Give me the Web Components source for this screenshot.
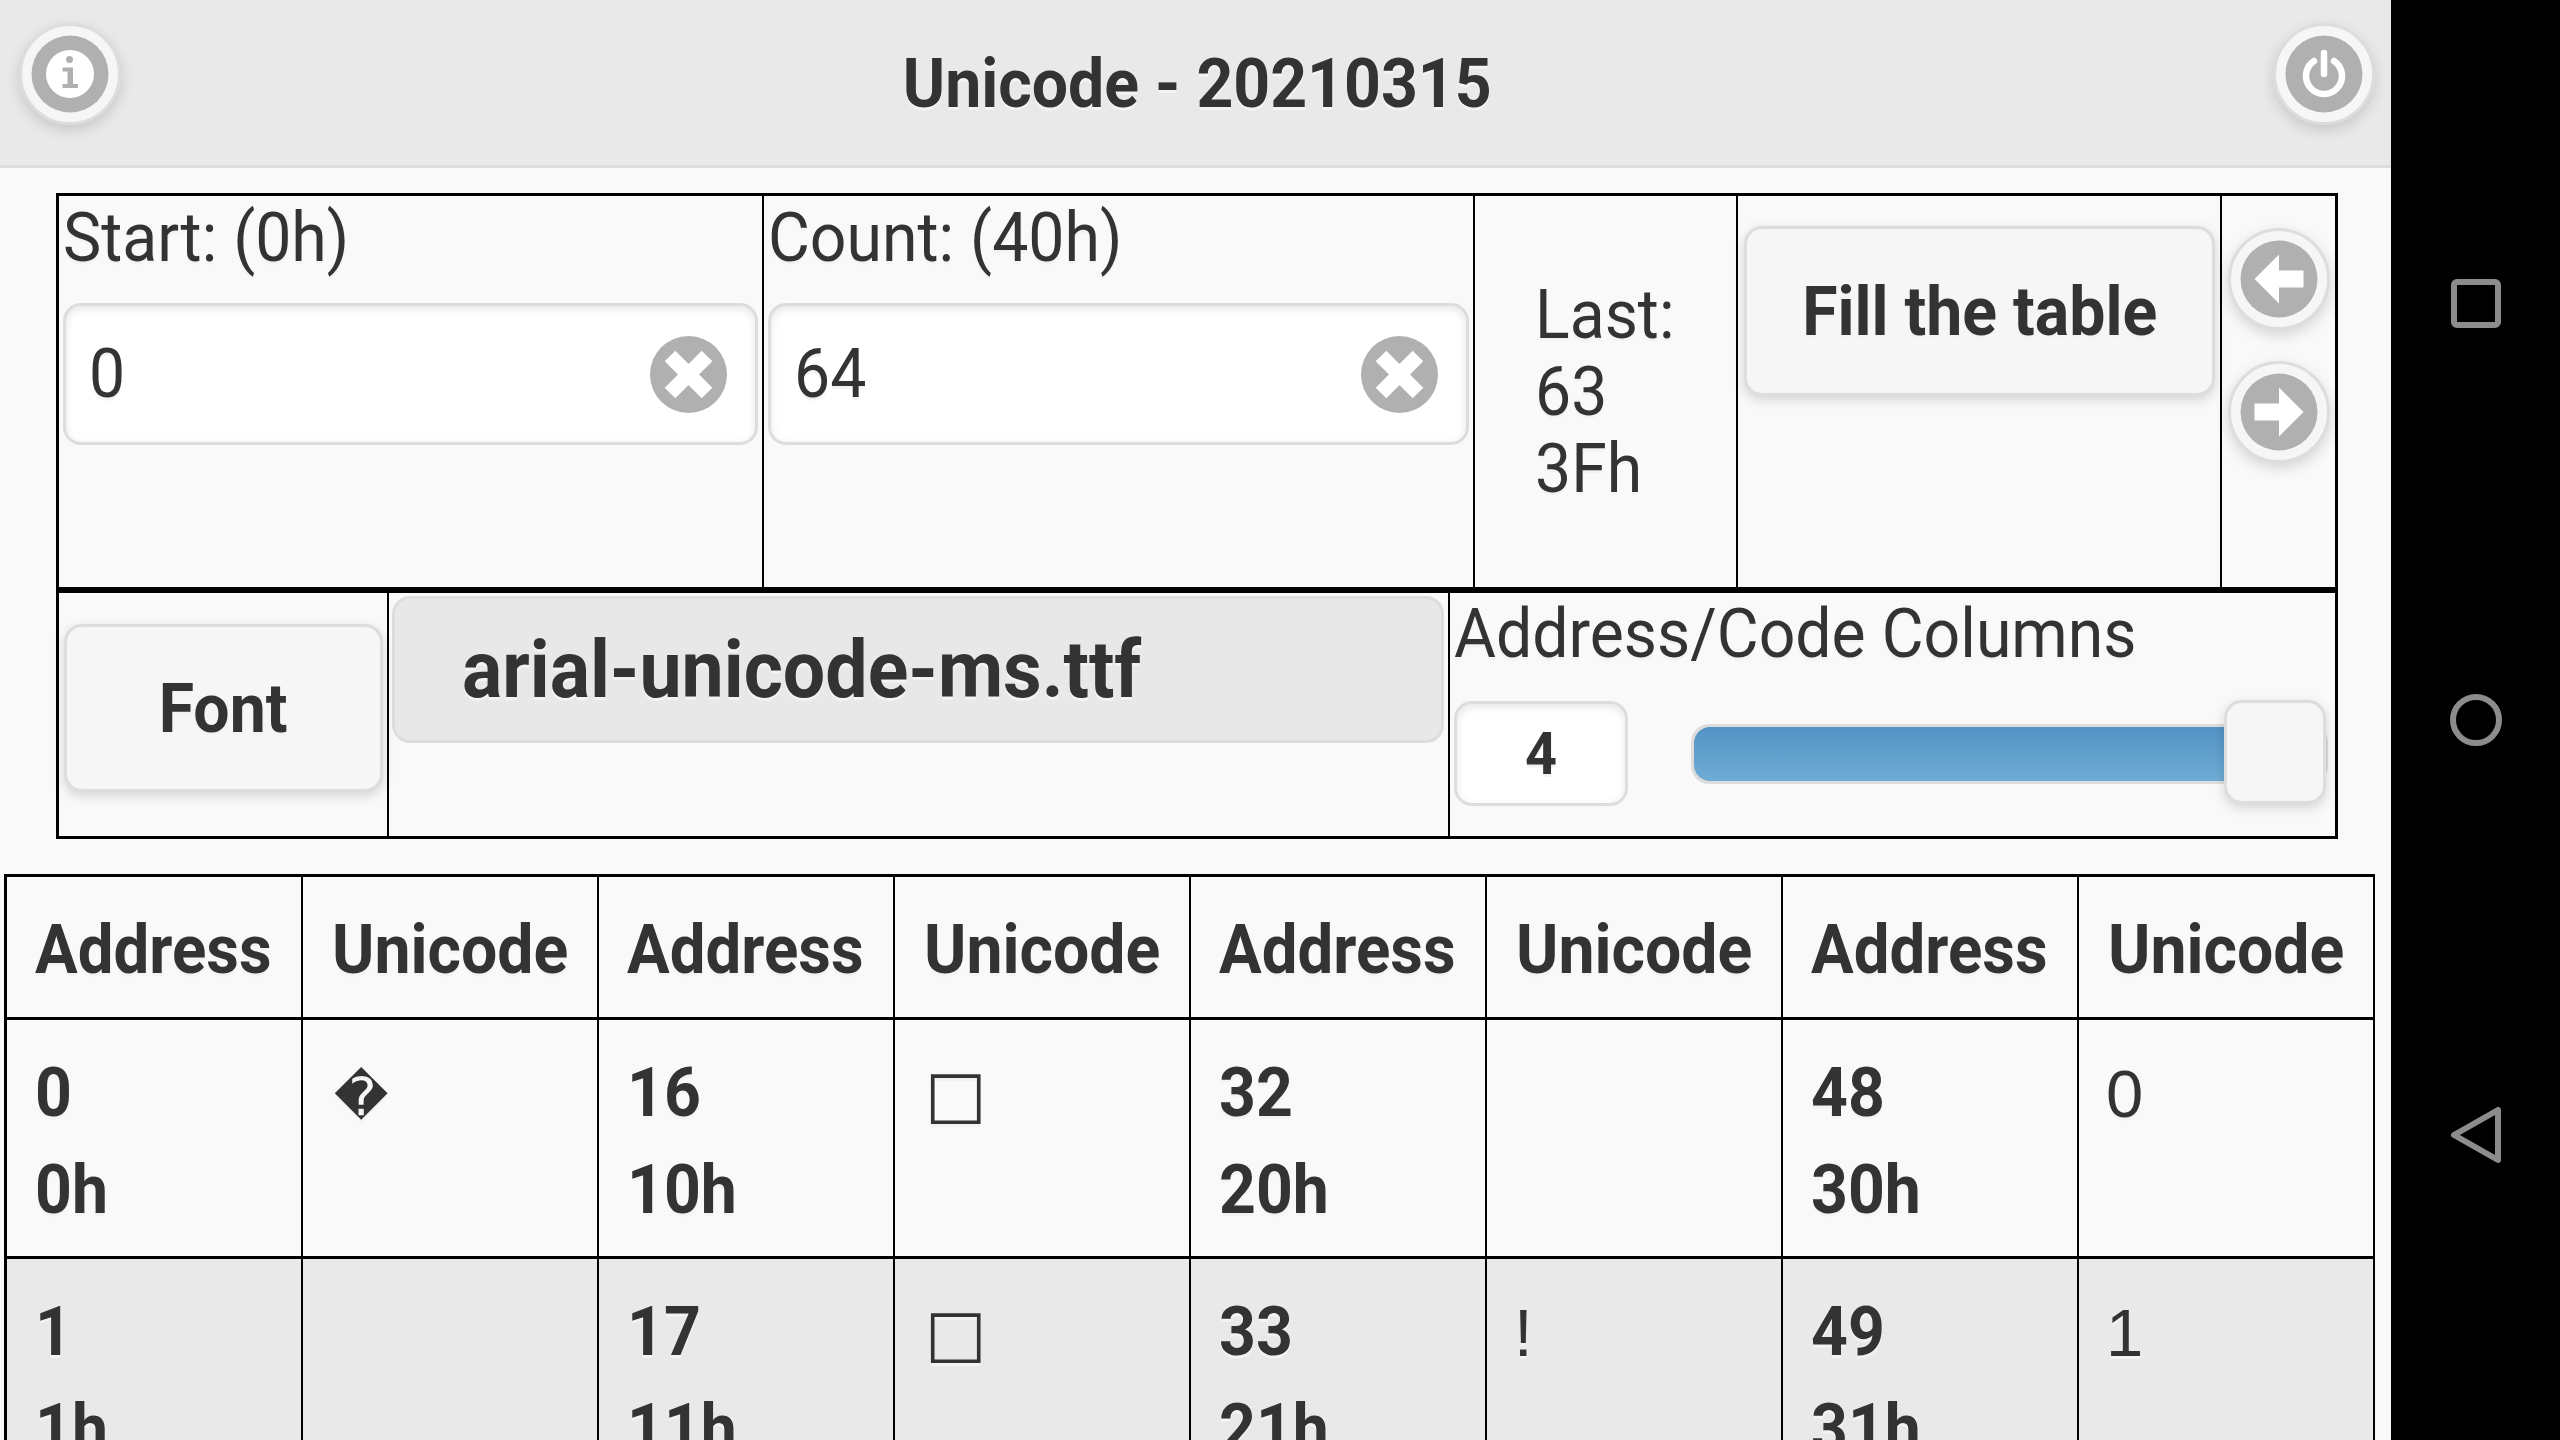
<!DOCTYPE html>
<html>
<head>
<meta charset="utf-8">
<title>Unicode</title>
<style>
html, body { margin: 0; height: 100%; background: #000; overflow: hidden; }
body { font-family: Roboto, "Liberation Sans", sans-serif; color: #333; }
</style>
</head>
<body>
<phone-screen>
  <app-page>
    <app-header title="Unicode - 20210315"></app-header>
    <control-panel></control-panel>
    <code-table></code-table>
  </app-page>
  <nav-bar slot="nav"></nav-bar>
</phone-screen>

<script>
const ICONS = {
    info: `<circle cx="50" cy="50" r="38.5" fill="#b0b0b0"/><circle cx="50" cy="50" r="24" fill="#fff"/>
        <circle cx="49.5" cy="35.5" r="3.5" fill="#b0b0b0"/>
        <path d="M42.5 43.5H53V60H58V64H42.5V60H47.5V47.5H42.5z" fill="#b0b0b0"/>`,
    power: `<circle cx="50" cy="50" r="38.5" fill="#b0b0b0"/>
        <path d="M40 37A18 18 0 1 0 60 37" fill="none" stroke="#fff" stroke-width="6.5" stroke-linecap="round"/>
        <path d="M50 29V50" fill="none" stroke="#fff" stroke-width="6.5" stroke-linecap="round"/>`,
    left: `<circle cx="50" cy="50" r="38.5" fill="#b0b0b0"/>
        <path d="M50 25.5L25.5 50L50 74.5V58.500H74.500V41.500H50Z" fill="#fff"/>`,
    right: `<circle cx="50" cy="50" r="38.5" fill="#b0b0b0"/>
        <path d="M50 25.5L74.500 50L50 74.5V58.500H25.500V41.500H50Z" fill="#fff"/>`
};

// the text in the shot is a bit taller than it is wide, so narrow it a little
const TEXT_CSS = `
    .t { display: inline-block; transform: scaleX(.946); transform-origin: 0 50%; white-space: nowrap; }
    .tc { display: inline-block; transform: scaleX(.946); white-space: nowrap; }
`;

class PhoneScreen extends HTMLElement {
    constructor() {
        super();
        this.attachShadow({ mode: 'open' });
        this.shadowRoot.innerHTML = `
        <style>
        :host { display: flex; width: 2560px; height: 1440px; overflow: hidden; }
        #app { width: 2391px; height: 1440px; overflow: hidden; background: #f9f9f9; }
        #nav { flex: 1; background: #000; }
        </style>
        <div id="app"><slot></slot></div>
        <div id="nav"><slot name="nav"></slot></div>
        `;
    }
}

class AppPage extends HTMLElement {
    constructor() {
        super();
        this.attachShadow({ mode: 'open' });
        this.shadowRoot.innerHTML = `
        <style>
        :host { display: block; }
        </style>
        <slot></slot>
        `;
    }
}

class RoundButton extends HTMLElement {
    constructor() {
        super();
        this.attachShadow({ mode: 'open' });
        this.shadowRoot.innerHTML = `
        <style>
        :host { display: block; width: 102px; height: 102px; }
        #b {
            box-sizing: border-box; width: 100%; height: 100%;
            border-radius: 50%;
            background: #f6f6f6;
            border: 3px solid #ddd;
            box-shadow: 0 5px 14px rgba(0,0,0,.15);
            display: flex; align-items: center; justify-content: center;
        }
        svg { width: 100px; height: 100px; flex: none; }
        </style>
        <div id="b"><svg viewBox="0 0 100 100">${ICONS[this.getAttribute('icon')]}</svg></div>
        `;
    }
}

class AppHeader extends HTMLElement {
    constructor() {
        super();
        this.attachShadow({ mode: 'open' });
        this.shadowRoot.innerHTML = `
        <style>
        ${TEXT_CSS}
        :host {
            display: flex; align-items: center; justify-content: space-between;
            box-sizing: border-box; height: 168px;
            padding: 0 16px 0 19px;
            background: #e9e9e9;
            border-bottom: 3px solid #ddd;
        }
        h1 {
            margin: 3px 0 0; font-size: 68px; font-weight: 700;
            text-shadow: 0 3px 0 #f3f3f3; line-height: 1;
        }
        round-button { margin-bottom: 18px; }
        </style>
        <round-button icon="info"></round-button>
        <h1><span class="tc">${this.getAttribute('title')}</span></h1>
        <round-button icon="power"></round-button>
        `;
    }
}

class TextField extends HTMLElement {
    constructor() {
        super();
        this.attachShadow({ mode: 'open' });
        this.shadowRoot.innerHTML = `
        <style>
        ${TEXT_CSS}
        :host {
            display: flex; align-items: center; justify-content: space-between;
            box-sizing: border-box; height: 142px;
            padding: 0 28px 0 23px;
            background: #fff;
            border: 3px solid #ddd;
            border-radius: 18px;
            box-shadow: inset 0 3px 8px rgba(0,0,0,.1);
            font-size: 68px;
            text-shadow: 0 3px 0 #f3f3f3;
        }
        svg { width: 77px; height: 77px; }
        </style>
        <span class="t">${this.getAttribute('value')}</span>
        <svg viewBox="0 0 77 77">
            <circle cx="38.5" cy="38.5" r="38.5" fill="#b0b0b0"/>
            <path d="M20 20 L57 57 M57 20 L20 57" stroke="#fff" stroke-width="15"/>
        </svg>
        `;
    }
}

class PushButton extends HTMLElement {
    constructor() {
        super();
        this.attachShadow({ mode: 'open' });
        this.shadowRoot.innerHTML = `
        <style>
        ${TEXT_CSS}
        :host {
            display: flex; align-items: center; justify-content: center;
            box-sizing: border-box;
            padding-top: 2px;
            background: #f6f6f6;
            border: 3px solid #ddd;
            border-radius: 18px;
            box-shadow: 0 4px 12px rgba(0,0,0,.15);
            font-size: 68px; font-weight: 700;
            text-shadow: 0 3px 0 #f3f3f3;
        }
        :host([left]) .tc { transform-origin: 0 50%; }
        </style>
        <span class="tc"><slot></slot></span>
        `;
    }
}

class ColumnSlider extends HTMLElement {
    constructor() {
        super();
        this.attachShadow({ mode: 'open' });
        this.shadowRoot.innerHTML = `
        <style>
        ${TEXT_CSS}
        :host { display: block; padding: 0 7px 0 4px; }
        #label { font-size: 68px; line-height: 77px; padding-top: 3px; text-shadow: 0 3px 0 #f3f3f3; white-space: nowrap; }
        #row { display: flex; align-items: center; margin-top: 28px; }
        #num {
            box-sizing: border-box; width: 174px; height: 105px;
            display: flex; align-items: center; justify-content: center;
            background: #fff; border: 3px solid #ddd; border-radius: 18px;
            box-shadow: inset 0 3px 8px rgba(0,0,0,.1);
            font-size: 59px; font-weight: 700; text-shadow: 0 3px 0 #f3f3f3;
        }
        #track {
            flex: 1; margin-left: 63px; height: 60px; box-sizing: border-box;
            background: #ddd; border: 3px solid #ddd; border-radius: 18px;
            position: relative;
        }
        #fill {
            height: 100%; margin-right: 50px; border-radius: 16px 0 0 16px;
            background: linear-gradient(#5393c5, #6facd5);
        }
        #handle {
            position: absolute; right: -1px; top: -27px;
            box-sizing: border-box; width: 102px; height: 104px;
            background: #f6f6f6; border: 3px solid #ddd; border-radius: 18px;
            box-shadow: 0 4px 12px rgba(0,0,0,.15);
        }
        </style>
        <div id="label"><span class="t">Address/Code Columns</span></div>
        <div id="row">
            <div id="num"><span class="tc">4</span></div>
            <div id="track"><div id="fill"></div><div id="handle"></div></div>
        </div>
        `;
    }
}

class ControlPanel extends HTMLElement {
    constructor() {
        super();
        this.attachShadow({ mode: 'open' });
        this.shadowRoot.innerHTML = `
        <style>
        ${TEXT_CSS}
        :host { display: block; margin: 25px 0 0 56px; width: 2282px; }
        .tbl { border: 3px solid #000; display: grid; background: #f9f9f9; box-sizing: border-box; }
        #top { height: 397px; grid-template-columns: 703px 711px 263px 484px 1fr; }
        #bottom { height: 249px; grid-template-columns: 328px 1061px 1fr; }
        .cell { border-left: 2px solid #000; min-width: 0; box-sizing: border-box; }
        .cell:first-child { border-left: 0; }
        .lbl { font-size: 68px; line-height: 77px; padding: 4px 0 0 4px; height: 96px; box-sizing: border-box; text-shadow: 0 3px 0 #f3f3f3; }
        text-field { margin: 11px 4px 0 4px; }
        #last { display: flex; flex-direction: column; justify-content: center; padding: 2px 0 0 60px; font-size: 68px; line-height: 77px; text-shadow: 0 3px 0 #f3f3f3; }
        #fill { padding: 30px 5px 0 6px; }
        #fill push-button { height: 170px; }
        #nav { padding: 32px 0 0 6px; display: flex; flex-direction: column; gap: 31px; }
        #font { padding: 31px 4px 0 5px; }
        #font push-button { height: 168px; }
        #file { padding: 3px 4px 0 3px; }
        #file push-button {
            height: 147px; background: #e8e8e8; box-shadow: none; justify-content: flex-start;
            padding: 0 0 0 67px; font-size: 79.500px;
        }
        </style>
        <div class="tbl" id="top">
            <div class="cell"><div class="lbl"><span class="t">Start: (0h)</span></div><text-field value="0"></text-field></div>
            <div class="cell"><div class="lbl"><span class="t">Count: (40h)</span></div><text-field value="64"></text-field></div>
            <div class="cell" id="last"><div class="t">Last:</div><div class="t">63</div><div class="t">3Fh</div></div>
            <div class="cell" id="fill"><push-button>Fill the table</push-button></div>
            <div class="cell" id="nav"><round-button icon="left"></round-button><round-button icon="right"></round-button></div>
        </div>
        <div class="tbl" id="bottom">
            <div class="cell" id="font"><push-button>Font</push-button></div>
            <div class="cell" id="file"><push-button left>arial-unicode-ms.ttf</push-button></div>
            <div class="cell"><column-slider></column-slider></div>
        </div>
        `;
    }
}

class CodeTable extends HTMLElement {
    constructor() {
        super();
        this.attachShadow({ mode: 'open' });
        const heads = [];
        for (let i = 0; i < 4; i++) {
            heads.push('<div class="c th"><span class="t addr">Address</span></div>', '<div class="c th uni"><span class="t">Unicode</span></div>');
        }
        const glyph = ch => {
            if (ch === '\uFFFD') return `<span class="rep">${ch}</span>`;
            if (ch === '\u25A1') return `<span class="tofu">${ch}</span>`;
            return ch;
        };
        const rows = [
            [['0', '0h', '\uFFFD'], ['16', '10h', '\u25A1'], ['32', '20h', ' '], ['48', '30h', '0']],
            [['1', '1h', ''], ['17', '11h', '\u25A1'], ['33', '21h', '!'], ['49', '31h', '1']]
        ];
        const body = rows.map((row, r) => row.map(([dec, hex, ch]) => `
            <div class="c ${r % 2 ? 'odd' : ''}"><b class="t">${dec}</b><b class="t">${hex}</b></div>
            <div class="c u ${r % 2 ? 'odd' : ''}">${glyph(ch)}</div>`).join('')).join('');
        this.shadowRoot.innerHTML = `
        <style>
        ${TEXT_CSS}
        :host { display: block; margin: 35px 0 0 4px; width: 2371px; }
        #t {
            display: grid; grid-template-columns: repeat(8, 1fr);
            grid-auto-rows: 239px;
            border-top: 3px solid #000; border-left: 3px solid #000; box-sizing: border-box;
            grid-template-rows: 143px;
        }
        .c {
            border-right: 2px solid #000; border-bottom: 3px solid #000;
            padding: 25px 0 0 28px; box-sizing: border-box;
            font-size: 68px; line-height: 97px; text-shadow: 0 3px 0 #f3f3f3;
            min-width: 0;
        }
        .th { font-weight: 700; line-height: 86px; display: flex; align-items: center; padding-top: 6px; padding-left: 28px; }
        .th.uni { padding-left: 29px; }
        .addr { transform: scaleX(.935); }
        .odd { background: #e9e9e9; }
        b.t { display: block; width: max-content; }
        .u { font-family: "Liberation Sans", Roboto, sans-serif; font-size: 67px; padding-left: 27px; }
        .rep { font-family: "DejaVu Sans", sans-serif; font-size: 53px; margin-left: 4px; vertical-align: 2px; }
        .tofu { font-family: "DejaVu Sans", sans-serif; font-size: 65px; margin-left: 3px; vertical-align: 8px; }
        </style>
        <div id="t">${heads.join('')}${body}</div>
        `;
    }
}

class NavBar extends HTMLElement {
    constructor() {
        super();
        this.attachShadow({ mode: 'open' });
        this.shadowRoot.innerHTML = `
        <style>
        :host { display: flex; flex-direction: column; align-items: center; justify-content: space-between; box-sizing: border-box; height: 1440px; padding: 275px 0 275px; }
        svg { display: block; width: 60px; height: 60px; fill: none; stroke: #8c8c8c; stroke-width: 6; stroke-linejoin: round; }
        </style>
        <svg viewBox="0 0 60 60"><rect x="8" y="7" width="44" height="43" rx="3"/></svg>
        <svg viewBox="0 0 60 60"><circle cx="30" cy="30" r="23"/></svg>
        <svg viewBox="0 0 60 60"><path d="M52 5 V55 L8 30 Z"/></svg>
        `;
    }
}

customElements.define('round-button', RoundButton);
customElements.define('phone-screen', PhoneScreen);
customElements.define('app-page', AppPage);
customElements.define('app-header', AppHeader);
customElements.define('text-field', TextField);
customElements.define('push-button', PushButton);
customElements.define('column-slider', ColumnSlider);
customElements.define('control-panel', ControlPanel);
customElements.define('code-table', CodeTable);
customElements.define('nav-bar', NavBar);
</script>
</body>
</html>
